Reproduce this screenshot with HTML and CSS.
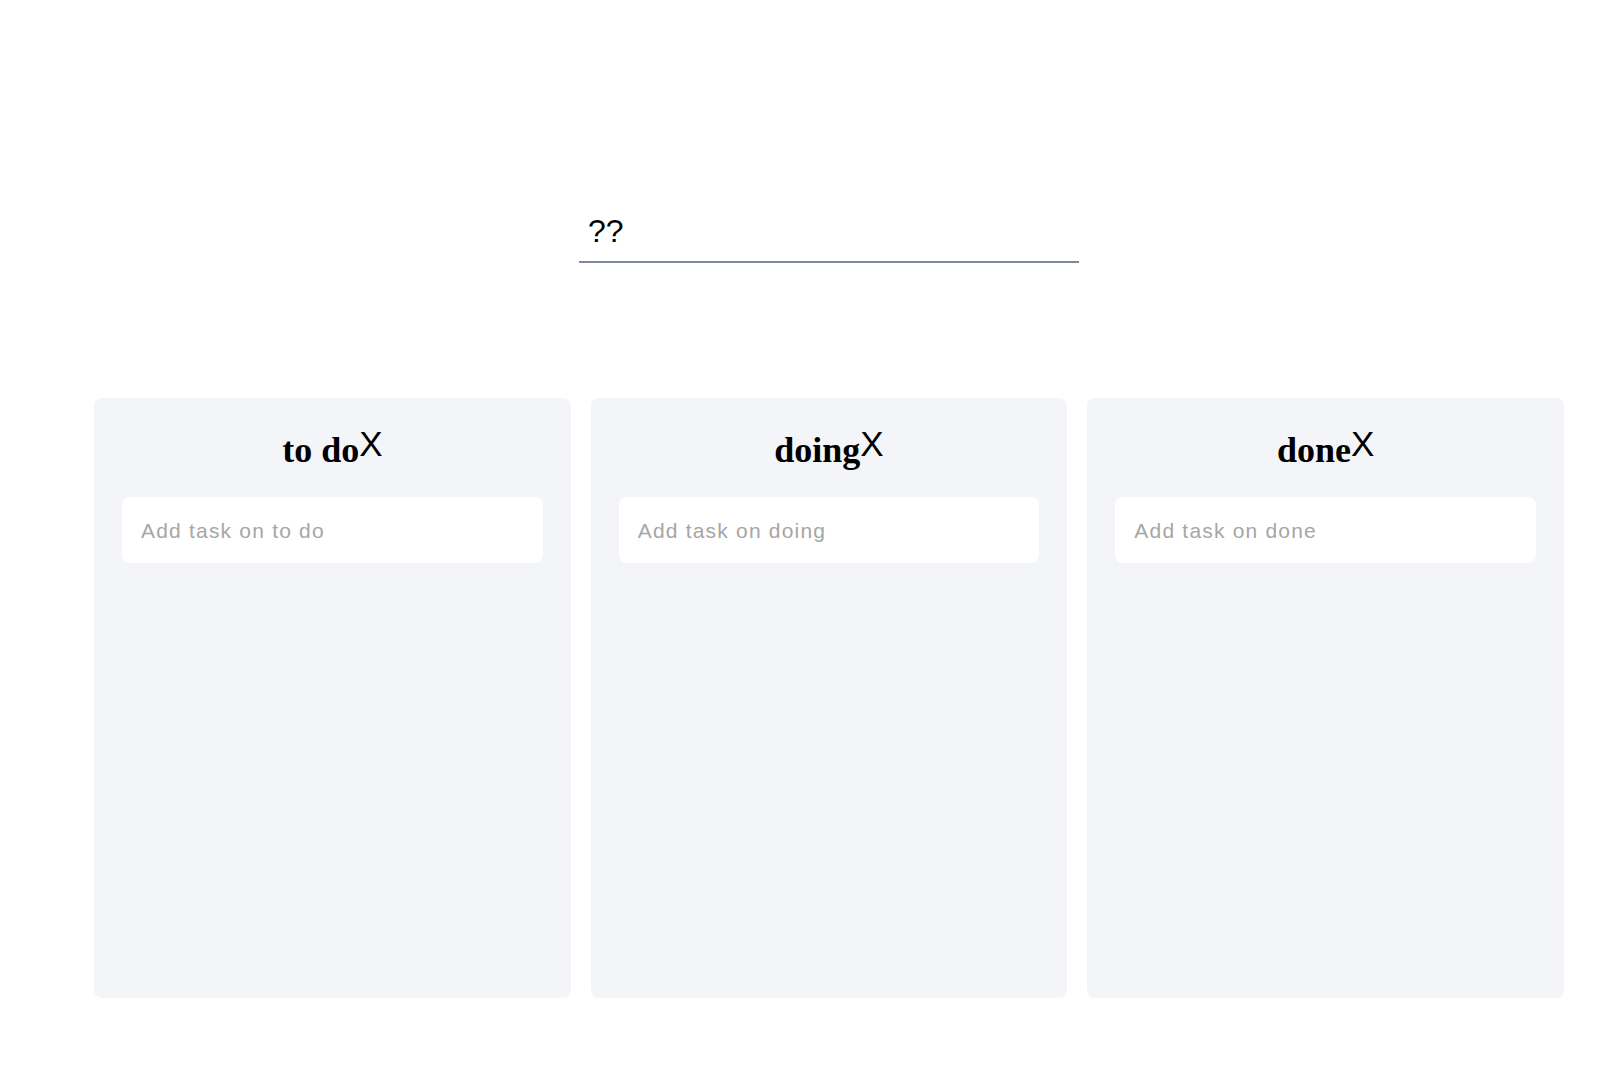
FILE: index.html
```html
<!DOCTYPE html>
<html lang="en">
<head>
<meta charset="utf-8">
<title>Board</title>
<link rel="stylesheet" href="styles.css">
</head>
<body>
  <div class="page">
    <header class="header">
      <input class="board-title" type="text" value="??">
    </header>
    <main class="board">
      <section class="column">
        <h2 class="column-title">to do<span class="close">X</span></h2>
        <input class="task-input" type="text" placeholder="Add task on to do">
      </section>
      <section class="column">
        <h2 class="column-title">doing<span class="close">X</span></h2>
        <input class="task-input" type="text" placeholder="Add task on doing">
      </section>
      <section class="column">
        <h2 class="column-title">done<span class="close">X</span></h2>
        <input class="task-input" type="text" placeholder="Add task on done">
      </section>
    </main>
  </div>
</body>
</html>
```
FILE: styles.css
```css
html, body {
  margin: 0;
  padding: 0;
  background: #ffffff;
}

.page {
  width: 1470px;
  margin-left: 94px;
  padding-top: 213px;
}

.header {
  display: flex;
  justify-content: center;
}

.board-title {
  width: 500px;
  box-sizing: border-box;
  height: 50px;
  margin: 0;
  padding: 0 9px 11px;
  border: none;
  border-bottom: 2px solid #7f8a9e;
  outline: none;
  background: transparent;
  font-family: "Liberation Sans", Arial, sans-serif;
  font-size: 32px;
  line-height: 37px;
  color: #000;
}

.board {
  display: flex;
  gap: 20px;
  margin-top: 135px;
}

.column {
  flex: 1;
  height: 600px;
  box-sizing: border-box;
  padding: 32px 28px 0 28px;
  background: #f4f5f9;
  border-radius: 8px;
}

.column-title {
  margin: 0 0 26px;
  text-align: center;
  font-family: "Liberation Serif", "Times New Roman", serif;
  font-weight: bold;
  font-size: 36px;
  line-height: 1.15;
  color: #000;
}

.close {
  font-family: "Liberation Sans", Arial, sans-serif;
  font-weight: normal;
  font-size: 35px;
  line-height: 0;
  vertical-align: 6px;
}

.task-input {
  display: block;
  width: 100%;
  height: 66px;
  box-sizing: border-box;
  margin: 0;
  padding: 2px 19px 0;
  border: none;
  border-radius: 8px;
  outline: none;
  background: #ffffff;
  font-family: "Liberation Sans", Arial, sans-serif;
  font-size: 21px;
  color: #333;
}

.task-input::placeholder {
  color: #a6a6a6;
  letter-spacing: 1.2px;
}
```
